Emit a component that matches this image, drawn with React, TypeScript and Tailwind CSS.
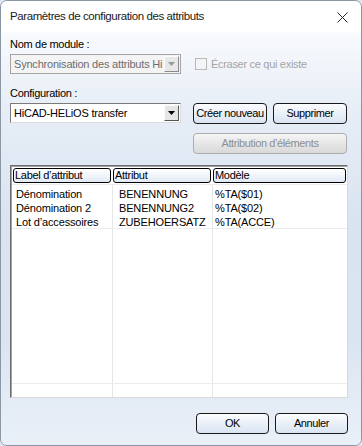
import React from "react";

function Btn({ label, w, disabled }: { label: string; w: string; disabled?: boolean }) {
  return (
    <div
      className={
        "h-[21px] flex items-center justify-center rounded-[4px] border text-[11px] leading-none tracking-[-0.4px] " +
        w +
        (disabled
          ? " border-[#adadad] bg-[linear-gradient(180deg,#f6f6f6_0%,#e6e6e6_50%,#d9d9d9_100%)] text-[#8f8f8f]"
          : " border-[#1a1a1a] bg-[linear-gradient(180deg,#fbfcfe_0%,#eaf0f8_50%,#d9e4f3_100%)] text-black")
      }
    >
      {label}
    </div>
  );
}

function Arrow({ color }: { color: string }) {
  return (
    <svg width="7" height="4" viewBox="0 0 7 4">
      <polygon points="0,0 7,0 3.5,4" fill={color} />
    </svg>
  );
}

export default function App() {
  const rows = [
    ["Dénomination", "BENENNUNG", "%TA($01)"],
    ["Dénomination 2", "BENENNUNG2", "%TA($02)"],
    ["Lot d\u2019accessoires", "ZUBEHOERSATZ", "%TA(ACCE)"],
  ];
  return (
    <div className="w-[362px] h-[446px] bg-[#dfe6ef]">
      <div className="w-full h-full rounded-[7px] border border-[#8c97a6] overflow-hidden flex flex-col font-['Liberation_Sans',Arial,sans-serif] text-black">
        {/* Title bar */}
        <div className="h-[31px] bg-white flex items-center justify-between pl-[9px] pr-[10px] shrink-0">
          <span className="text-[11.5px] tracking-[-0.4px] text-[#1a1a1a] mt-[1px]">
            Paramètres de configuration des attributs
          </span>
          <svg width="11" height="11" viewBox="0 0 11 11" className="mr-[3px] mt-[1px]">
            <path d="M0.5 0.5 L10.5 10.5 M10.5 0.5 L0.5 10.5" stroke="#222" strokeWidth="1" />
          </svg>
        </div>
        {/* Body */}
        <div className="flex-1 flex flex-col pl-[9px] pr-[13px] bg-[linear-gradient(180deg,#f8fafd_0%,#e6edf6_20%,#dae4f1_45%,#dbe5f2_75%,#eaf0f8_100%)]">
          <div className="mt-[6px] h-[13px] leading-[13px] text-[11px] tracking-[-0.3px]">Nom de module :</div>
          <div className="mt-[3px] flex items-center">
            <div className="w-[171px] h-[20px] border border-[#a5a5a5] bg-[#f4f4f4] flex items-center">
              <span className="flex-1 pl-[3px] text-[11px] tracking-[-0.2px] text-[#6d6d6d] overflow-hidden whitespace-nowrap">
                Synchronisation des attributs Hi
              </span>
              <div className="w-[15px] h-[16px] mr-[1px] border border-t-[#fdfdfd] border-l-[#fdfdfd] border-r-[#8a8a8a] border-b-[#8a8a8a] bg-[#e8e8e8] flex items-center justify-center">
                <Arrow color="#9a9a9a" />
              </div>
            </div>
            <div className="ml-[14px] w-[12px] h-[12px] border border-[#b9b9b9] bg-[#f3f4f6]" />
            <span className="ml-[4px] text-[11px] tracking-[-0.3px] text-[#a4a4a4]">Écraser ce qui existe</span>
          </div>
          <div className="mt-[13px] h-[13px] leading-[13px] text-[11px] tracking-[-0.3px]">Configuration :</div>
          <div className="mt-[3px] flex items-start">
            <div className="w-[171px] h-[20px] border border-t-[#7a7a7a] border-l-[#7a7a7a] border-r-[#dcdcdc] border-b-[#dcdcdc] bg-white flex items-center">
              <span className="flex-1 pl-[3px] text-[11px] tracking-[-0.2px] text-black whitespace-nowrap">HiCAD-HELiOS transfer</span>
              <div className="w-[15px] h-[16px] mr-[1px] border border-t-[#fdfdfd] border-l-[#fdfdfd] border-r-[#555] border-b-[#555] bg-[#e6e6e6] flex items-center justify-center">
                <Arrow color="#000" />
              </div>
            </div>
            <div className="ml-[12px] flex gap-[6px]">
              <Btn label="Créer nouveau" w="w-[74px]" />
              <Btn label="Supprimer" w="w-[74px]" />
            </div>
          </div>
          <div className="mt-[9px] flex">
            <div className="ml-[183px]">
              <Btn label="Attribution d’éléments" w="w-[154px]" disabled />
            </div>
          </div>
          {/* Table */}
          <div className="mt-[11px] h-[233px] border border-t-[#6e6e6e] border-l-[#6e6e6e] border-r-[#d9d9d9] border-b-[#d9d9d9] bg-white flex flex-col">
            <div className="flex-1 border-t border-l border-t-[#a0a0a0] border-l-[#a0a0a0] flex flex-col relative">
              <div className="flex gap-[2px] pl-[1px] pt-[1px] pr-[1px]">
                {[
                  ["Label d’attribut", "w-[98px]"],
                  ["Attribut", "w-[98px]"],
                  ["Modèle", "flex-1"],
                ].map(([t, w]) => (
                  <div
                    key={t}
                    className={
                      w +
                      " h-[15px] rounded-[3px] border border-black bg-[linear-gradient(180deg,#ffffff_0%,#eef3fa_60%,#e1e9f5_100%)] flex items-center pl-[1px] text-[11px] tracking-[-0.3px]"
                    }
                  >
                    {t}
                  </div>
                ))}
              </div>
              <div className="flex-1 flex border-t border-[#ececec] mt-[1px]">
                {[0, 1, 2].map((c) => (
                  <div
                    key={c}
                    className={
                      (c === 0 ? "w-[101px] border-r pl-[4px]" : c === 1 ? "w-[100px] border-r pl-[6px]" : "flex-1 pl-[2px]") +
                      " border-[#e6e6e6] flex flex-col pt-[2px]"
                    }
                  >
                    {rows.map((r) => (
                      <div key={r[0]} className="h-[14px] leading-[14px] text-[11px] tracking-[-0.15px] whitespace-nowrap">
                        {r[c]}
                      </div>
                    ))}
                  </div>
                ))}
              </div>
              <div className="absolute left-0 right-0 top-[61px] border-t border-[#ececec]" />
              <div className="absolute left-0 right-0 top-[216px] border-t border-[#ececec]" />
            </div>
          </div>
          <div className="mt-[15px] flex justify-end gap-[6px] pr-[0px]">
            <Btn label="OK" w="w-[73px]" />
            <Btn label="Annuler" w="w-[73px]" />
          </div>
        </div>
      </div>
    </div>
  );
}
